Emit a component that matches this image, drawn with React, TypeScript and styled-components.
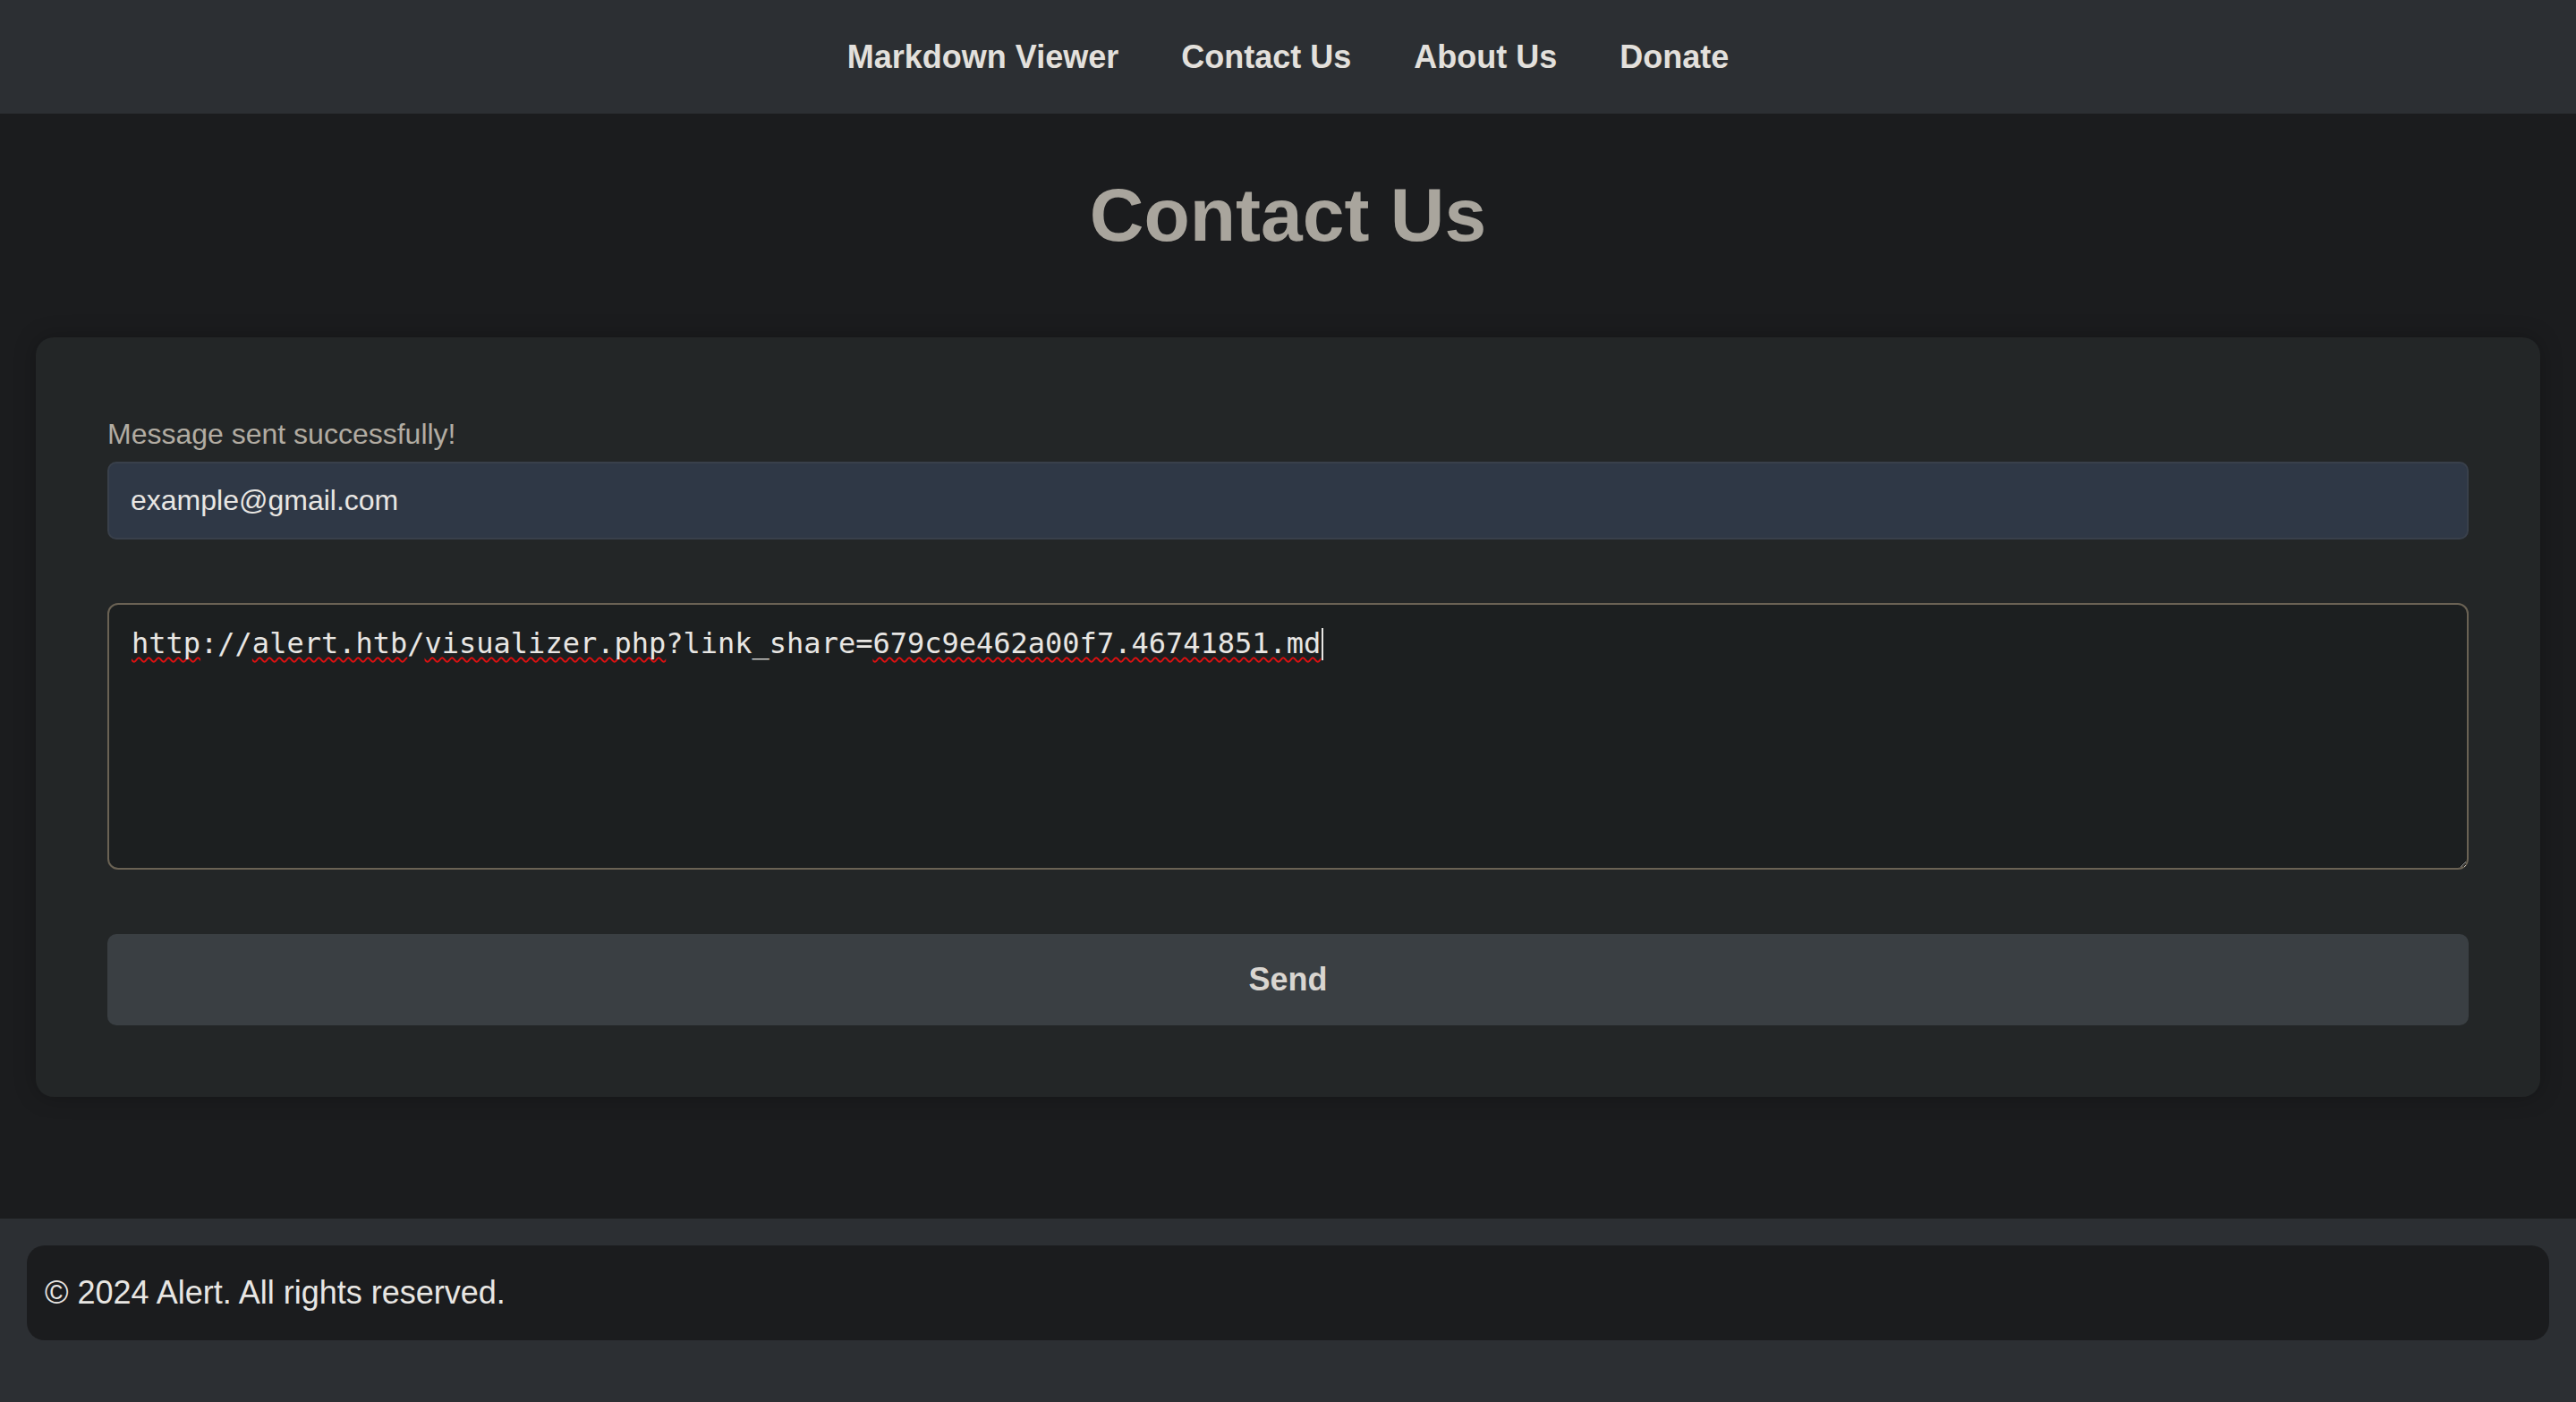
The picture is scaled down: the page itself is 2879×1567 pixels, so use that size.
import React from "react";
import styled, { createGlobalStyle } from "styled-components";

const GlobalStyle = createGlobalStyle`
  html, body {
    margin: 0;
    padding: 0;
    background: #2c2f33;
    font-family: "Liberation Sans", Arial, sans-serif;
    color: #e8e6e3;
  }
  * { box-sizing: border-box; }
`;

const NavBar = styled.nav`
  height: 127px;
  background: #2c2f33;
  display: flex;
  align-items: center;
  justify-content: center;
  gap: 70px;
`;

const NavLink = styled.a`
  font-size: 36px;
  font-weight: 700;
  color: #e3e0dc;
  text-decoration: none;
  cursor: pointer;
`;

const Main = styled.main`
  background: #1b1c1e;
  padding: 65px 40px 136px;
`;

const Title = styled.h1`
  margin: 0 0 88px;
  text-align: center;
  font-size: 84px;
  font-weight: 700;
  color: #a9a59d;
`;

const Card = styled.section`
  background: #232627;
  border-radius: 20px;
  padding: 90px 80px 80px;
  box-shadow: 0 0 24px rgba(0, 0, 0, 0.25);
`;

const Form = styled.form`
  display: flex;
  flex-direction: column;
`;

const Label = styled.label`
  display: block;
  font-size: 32px;
  color: #b2aca2;
  margin-bottom: 12px;
`;

const EmailInput = styled.input`
  height: 87px;
  width: 100%;
  padding: 0 24px;
  border: 2px solid #39404b;
  border-radius: 10px;
  background: #2f3846;
  color: #e8e6e3;
  font-family: "Liberation Sans", Arial, sans-serif;
  font-size: 32px;
  outline: none;
`;

const MessageBox = styled.div`
  margin-top: 71px;
  height: 298px;
  padding: 24px 25px;
  border: 2px solid #6a6254;
  border-radius: 12px;
  background: #1c1f20;
  color: #e8e6e3;
  font-family: "DejaVu Sans Mono", "Liberation Mono", monospace;
  font-size: 32px;
  white-space: pre-wrap;
  overflow: auto;
  resize: vertical;
  outline: none;
  color-scheme: dark;
`;

const Misspelled = styled.span`
  text-decoration: underline wavy #e01010;
  text-decoration-thickness: 1.5px;
  text-decoration-skip-ink: none;
  text-underline-offset: 4px;
`;

const Caret = styled.span`
  display: inline-block;
  width: 2px;
  height: 36px;
  margin-left: 1px;
  background: #e8e6e3;
  vertical-align: -8px;
`;

const SendButton = styled.button`
  margin-top: 72px;
  height: 102px;
  width: 100%;
  border: none;
  border-radius: 10px;
  background: #3a3f43;
  color: #d9d5d0;
  font-family: "Liberation Sans", Arial, sans-serif;
  font-size: 36px;
  font-weight: 700;
  cursor: pointer;
`;

const Footer = styled.footer`
  background: #2c2f33;
  padding: 30px;
`;

const FooterInner = styled.div`
  background: #1b1c1e;
  border-radius: 20px;
  padding: 32px 20px;
  font-size: 36px;
  color: #e8e6e3;
`;

export default function App() {
  return (
    <>
      <GlobalStyle />
      <NavBar>
        <NavLink>Markdown Viewer</NavLink>
        <NavLink>Contact Us</NavLink>
        <NavLink>About Us</NavLink>
        <NavLink>Donate</NavLink>
      </NavBar>
      <Main>
        <Title>Contact Us</Title>
        <Card>
          <Form onSubmit={(e) => e.preventDefault()}>
            <Label htmlFor="email">Message sent successfully!</Label>
            <EmailInput id="email" type="email" defaultValue="example@gmail.com" />
            <MessageBox
              role="textbox"
              aria-multiline="true"
              contentEditable
              suppressContentEditableWarning
            >
              <Misspelled>http</Misspelled>://<Misspelled>alert.htb</Misspelled>/
              <Misspelled>visualizer.php</Misspelled>?link_share=
              <Misspelled>679c9e462a00f7.46741851.md</Misspelled>
              <Caret />
            </MessageBox>
            <SendButton type="submit">Send</SendButton>
          </Form>
        </Card>
      </Main>
      <Footer>
        <FooterInner>© 2024 Alert. All rights reserved.</FooterInner>
      </Footer>
    </>
  );
}
